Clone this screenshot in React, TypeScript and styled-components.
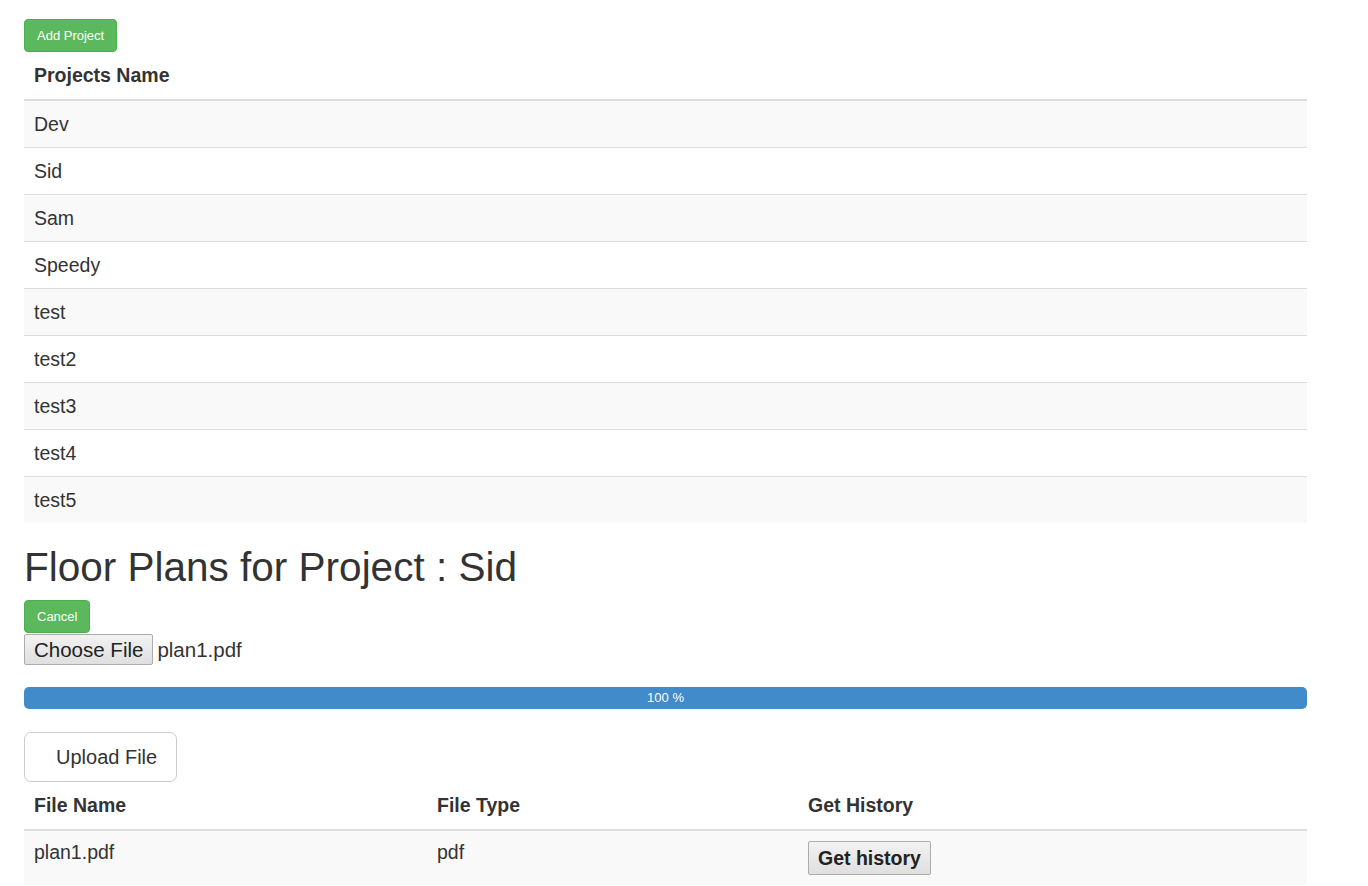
import React from 'react';
import styled, { createGlobalStyle } from 'styled-components';

const GlobalStyle = createGlobalStyle`
  body {
    margin: 0;
    background: #fff;
    color: #333;
    font-family: "Liberation Sans", Arial, Helvetica, sans-serif;
  }
`

const Page = styled.div`
  width: 1283px;
  padding: 19px 0 0 24px;
`

const GreenButton = styled.button`
  display: block;
  height: 33px;
  padding: 0 12px;
  font-family: inherit;
  font-size: 13px;
  color: #fff;
  background: #5cb85c;
  border: 1px solid #4cae4c;
  border-radius: 4px;
  cursor: pointer;
`

const Table = styled.table`
  width: 100%;
  border-collapse: collapse;
  border-spacing: 0;
  font-size: 19.5px;

  th {
    height: 47px;
    padding: 0 10px;
    text-align: left;
    font-weight: bold;
    vertical-align: middle;
    border-bottom: 2px solid #ddd;
  }

  tbody tr:nth-child(odd) td {
    background: #f9f9f9;
  }
`

const Cell = styled.td<{ $top?: boolean }>`
  height: ${p => (p.$top ? '44px' : '46px')};
  padding: ${p => (p.$top ? '10px 10px 0' : '0 10px')};
  vertical-align: ${p => (p.$top ? 'top' : 'middle')};
  border-top: 1px solid #ddd;
`

const Heading = styled.h2`
  margin: 21px 0 10px;
  font-size: 40.5px;
  font-weight: 400;
  line-height: 46px;
`

const FileRow = styled.div`
  display: flex;
  align-items: center;
  height: 31px;
  margin-top: 1px;
  font-size: 20.5px;
`

const SystemButton = styled.button<{ $bold?: boolean }>`
  height: ${p => (p.$bold ? '34px' : '31px')};
  padding: 0 9px;
  font-family: inherit;
  font-size: ${p => (p.$bold ? '19.5px' : '20.5px')};
  font-weight: ${p => (p.$bold ? 'bold' : 'normal')};
  color: #222;
  background: linear-gradient(#f2f2f2, #dfdfdf);
  border: 1px solid #adadad;
  border-radius: 2px;
  cursor: pointer;
`

const FileName = styled.span`
  margin-left: 4px;
`

const Progress = styled.div`
  height: 22px;
  margin-top: 22px;
  background: #f5f5f5;
  border-radius: 5px;
  overflow: hidden;
`

const ProgressBar = styled.div`
  height: 100%;
  background: #428bca;
  color: #fff;
  font-size: 13px;
  line-height: 22px;
  text-align: center;
`

const UploadButton = styled.button`
  display: block;
  height: 50px;
  margin-top: 23px;
  padding: 0 19px 0 31px;
  font-family: inherit;
  font-size: 20px;
  color: #333;
  background: #fff;
  border: 1px solid #ccc;
  border-radius: 7px;
  cursor: pointer;
`

const projects = ['Dev', 'Sid', 'Sam', 'Speedy', 'test', 'test2', 'test3', 'test4', 'test5']

const files = [{ name: 'plan1.pdf', type: 'pdf' }]

export default function App() {
  const progress = 100

  return (
    <>
      <GlobalStyle />
      <Page>
        <GreenButton>Add Project</GreenButton>
        <Table>
          <thead>
            <tr>
              <th>Projects Name</th>
            </tr>
          </thead>
          <tbody>
            {projects.map(name => (
              <tr key={name}>
                <Cell>{name}</Cell>
              </tr>
            ))}
          </tbody>
        </Table>

        <Heading>Floor Plans for Project : Sid</Heading>
        <GreenButton>Cancel</GreenButton>
        <FileRow>
          <SystemButton>Choose File</SystemButton>
          <FileName>plan1.pdf</FileName>
        </FileRow>

        <Progress>
          <ProgressBar style={{ width: `${progress}%` }}>{progress} %</ProgressBar>
        </Progress>

        <UploadButton>Upload File</UploadButton>

        <Table>
          <colgroup>
            <col style={{ width: 403 }} />
            <col style={{ width: 371 }} />
            <col />
          </colgroup>
          <thead>
            <tr>
              <th>File Name</th>
              <th>File Type</th>
              <th>Get History</th>
            </tr>
          </thead>
          <tbody>
            {files.map(f => (
              <tr key={f.name}>
                <Cell $top>{f.name}</Cell>
                <Cell $top>{f.type}</Cell>
                <Cell $top>
                  <SystemButton $bold>Get history</SystemButton>
                </Cell>
              </tr>
            ))}
          </tbody>
        </Table>
      </Page>
    </>
  )
}
